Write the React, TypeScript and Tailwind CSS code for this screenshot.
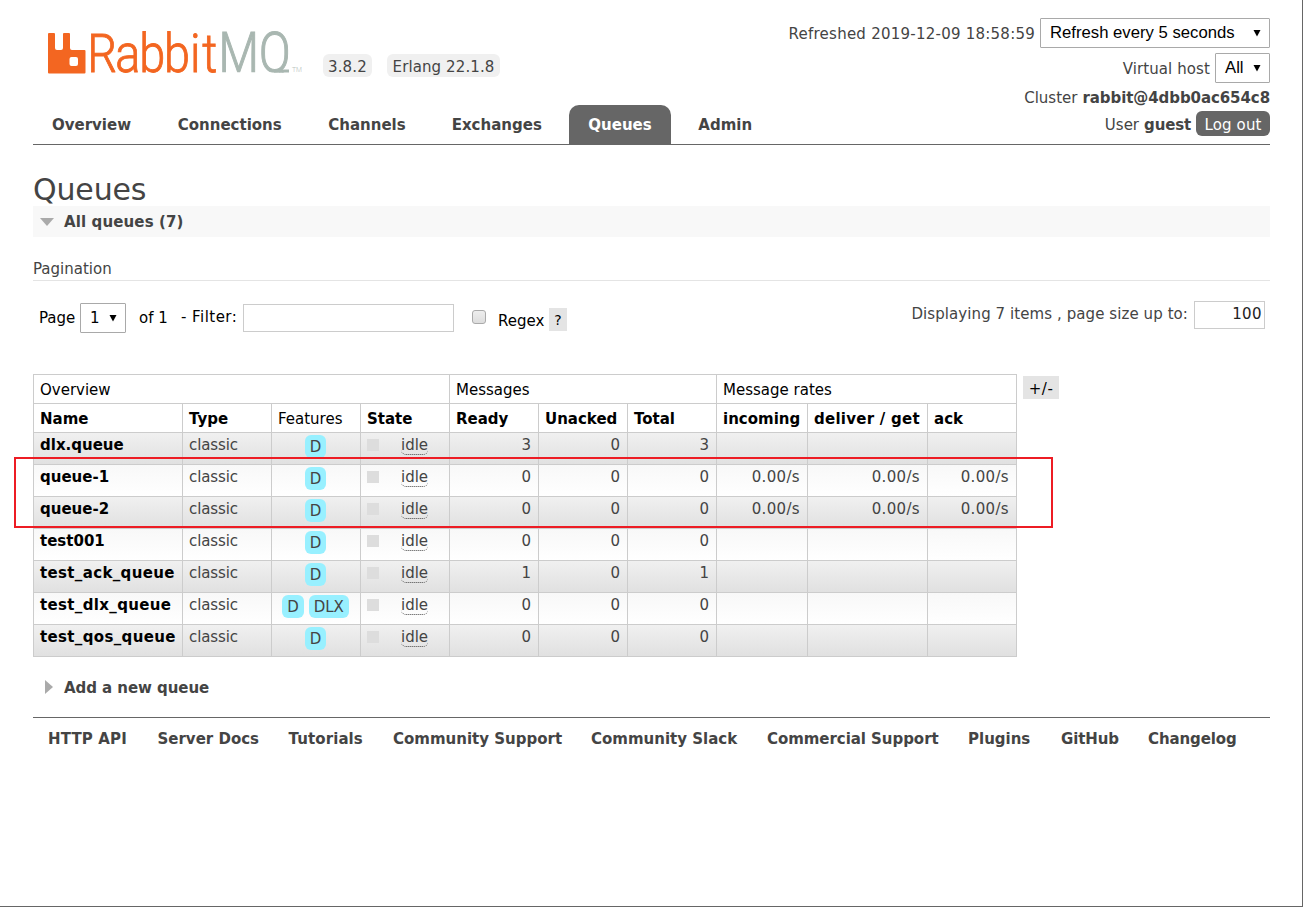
import { ReactNode } from 'react'
import clsx from 'clsx'

type Queue = {
  name: string
  features: string[]
  ready: number
  unacked: number
  total: number
  rates?: string[]
}

const tabs = [
  { label: 'Overview', box: 'w-[117px]' },
  { label: 'Connections', box: 'w-[143px]' },
  { label: 'Channels', box: 'w-[115px]' },
  { label: 'Exchanges', box: 'w-[128px]' },
  { label: 'Queues', box: 'w-[102px]' },
  { label: 'Admin', box: 'w-[92px]' },
]

const queues: Queue[] = [
  { name: 'dlx.queue', features: ['D'], ready: 3, unacked: 0, total: 3 },
  { name: 'queue-1', features: ['D'], ready: 0, unacked: 0, total: 0, rates: ['0.00/s', '0.00/s', '0.00/s'] },
  { name: 'queue-2', features: ['D'], ready: 0, unacked: 0, total: 0, rates: ['0.00/s', '0.00/s', '0.00/s'] },
  { name: 'test001', features: ['D'], ready: 0, unacked: 0, total: 0 },
  { name: 'test_ack_queue', features: ['D'], ready: 1, unacked: 0, total: 1 },
  { name: 'test_dlx_queue', features: ['D', 'DLX'], ready: 0, unacked: 0, total: 0 },
  { name: 'test_qos_queue', features: ['D'], ready: 0, unacked: 0, total: 0 },
]

const footerLinks = [
  { label: 'HTTP API', box: 'w-[109.500px] tracking-[0.15px]' },
  { label: 'Server Docs', box: 'w-[131px]' },
  { label: 'Tutorials', box: 'w-[104.500px] tracking-[0.1px]' },
  { label: 'Community Support', box: 'w-[198px]' },
  { label: 'Community Slack', box: 'w-[176px]' },
  { label: 'Commercial Support', box: 'w-[201px] tracking-[-0.050px]' },
  { label: 'Plugins', box: 'w-[93px]' },
  { label: 'GitHub', box: 'w-[87px] tracking-[-0.1px]' },
  { label: 'Changelog', box: 'w-[90px] tracking-[-0.1px]' },
]

const headCell = 'h-[29px] border-r border-b border-[#ccc] px-1.5 pt-[2px] pb-0 text-left align-middle text-black'
const bodyCell = 'h-8 border-r border-b border-[#ccc] px-1.5 pt-[2px] align-top leading-[20px]'
const numberCell = 'h-8 border-r border-b border-[#ccc] pr-[7px] pl-1 pt-[2px] text-right align-top leading-[20px]'

const Logo = () => (
  <svg width="258" height="62" viewBox="0 0 258 62" className="block overflow-visible">
    <path
      fill="#f36621"
      fillRule="evenodd"
      d="M2 3h5q1 0 1 1v14q0 2 2 2h4q2 0 2-2v-14q0-1 1-1h5q1 0 1 1v14q0 2 2 2h12.500q1 0 1 1v21.500q0 1-1 1h-35.500q-1 0-1-1v-38.500q0-1 1-1zM24.500 27q-2 0-2 2v5q0 2 2 2h4.500q2 0 2-2v-5q0-2-2-2z"
    />
    <clipPath id="baseline"><path d="M165 0h80v42.500h-80z" /></clipPath>
    <g className="font-[Roboto,sans-serif] font-light">
      <text transform="scale(0.86 1)" x="46.900 79.500 107.200 136.200 166.200 180.600" y="42" fill="#f36621" stroke="#f36621" strokeWidth="0.900" fontSize="54.500">Rabbit</text>
      <g clipPath="url(#baseline)">
        <text x="171.500" y="42" fill="#a9b7b1" stroke="#a9b7b1" strokeWidth="1.100" fontSize="55" textLength="72" lengthAdjust="spacingAndGlyphs">MQ</text>
      </g>
      {/* flat tail of the Q */}
      <path d="M227 39.500h15v3h-15z" fill="#a9b7b1" />
      <text x="245" y="42" fill="#b8c2be" fontSize="7.500" textLength="10" lengthAdjust="spacingAndGlyphs">TM</text>
    </g>
  </svg>
)

const SelectBox = ({ className, children }: { className: string; children: ReactNode }) => (
  <button className={clsx('flex items-center justify-between rounded-[1px] border border-[#a9a9a9] bg-white pr-[8px] pl-[9px] text-black', className)}>
    <span>{children}</span>
    <svg width="8" height="8" viewBox="0 0 8 8"><path d="M0.500 1h7l-3.500 6.500z" fill="#000" /></svg>
  </button>
)

const Header = () => (
  <header className="flex h-[145px] justify-between border-b border-[#666]">
    <div className="flex flex-col">
      <div className="flex h-[105px] pt-[30px] pl-[14px]">
        <Logo />
        <span className="mt-6 ml-[18px] flex h-[23px] w-[49px] items-center justify-center rounded-md bg-[#f0f0f0] pt-[3px] tracking-[0.2px]">3.8.2</span>
        <span className="mt-6 ml-[15px] flex h-[23px] w-[113px] items-center justify-center rounded-md bg-[#f0f0f0] pt-[3px] tracking-[0.1px]">Erlang 22.1.8</span>
      </div>
      <nav className="flex h-[39px] gap-x-[8.250px]">
        {tabs.map(tab => (
          <a
            key={tab.label}
            className={clsx('flex items-center justify-center rounded-t-[10px] font-bold', tab.box, tab.label === 'Queues' && 'bg-[#666] text-white')}
          >
            {tab.label}
          </a>
        ))}
      </nav>
    </div>
    <div className="flex flex-col items-end pt-[18px]">
      <div className="flex h-[30px] items-center gap-[5px]">
        <span className="pt-[2px] tracking-[0.240px]">Refreshed 2019-12-09 18:58:59</span>
        <SelectBox className="h-[30px] w-[230px] font-['Liberation_Sans',sans-serif] text-[16.700px]">Refresh every 5 seconds</SelectBox>
      </div>
      <div className="mt-[5px] flex h-[30px] items-center gap-[5px]">
        <span className="pt-[2px] tracking-[0.1px]">Virtual host</span>
        <SelectBox className="h-[30px] w-[55px] font-['Liberation_Sans',sans-serif] text-[16.700px]">All</SelectBox>
      </div>
      <div className="mt-[5px] flex h-[20px] items-center gap-[5px]">
        <span>Cluster</span>
        <b className="tracking-[-0.080px]">rabbit@4dbb0ac654c8</b>
      </div>
      <div className="mt-[3px] flex h-[25px] items-center gap-[5px]">
        <span className="pt-[2px]">User</span>
        <b className="pt-[2px] tracking-[-0.150px]">guest</b>
        <button className="h-[25px] w-[74px] rounded-md bg-[#666] pt-[2px] tracking-[0.150px] text-white">Log out</button>
      </div>
    </div>
  </header>
)

const PageControls = () => (
  <div className="flex h-[38px] items-start pt-[22px] text-black">
    <span className="ml-[6px] w-[41px] pt-[5px]">Page</span>
    <SelectBox className="h-[30px] w-[46px]">1</SelectBox>
    <span className="ml-[13px] w-[42px] pt-[5px]">of 1</span>
    <span className="w-[62px] pt-[4px] tracking-[0.450px] whitespace-nowrap">- Filter:</span>
    <input className="mt-px h-[28px] w-[211px] border border-[#ccc] bg-white" />
    <span className="mt-[7px] ml-[18px] size-[14px] rounded-[3px] border border-[#aaa] bg-linear-to-b from-[#eee] to-[#ddd]" />
    <span className="ml-[12px] w-[51px] pt-[8px]">Regex</span>
    <button className="mt-[5px] h-[23px] w-[18px] bg-[#e4e4e4] text-sm">?</button>
    <span className="ml-auto pt-[1px] pr-[6px] tracking-[0.080px] text-[#444]">Displaying 7 items , page size up to:</span>
    <input className="mt-[-2px] mr-[5px] h-[28px] w-[71px] border border-[#ccc] bg-white pr-[2px] pb-[2px] text-right tracking-[0.400px] text-[#222]" defaultValue="100" />
  </div>
)

const Tag = ({ children }: { children: ReactNode }) => (
  <span className="flex h-[23px] items-center rounded-md bg-[#98f0ff] px-[5px] pt-px">{children}</span>
)

const QueueTable = () => (
  <table className="w-[984px] table-fixed border-separate border-spacing-0 border-t border-l border-[#ccc]">
    <colgroup>
      <col className="w-[149px]" />
      <col className="w-[89px]" />
      <col className="w-[89px]" />
      <col className="w-[89px]" />
      <col className="w-[89px]" />
      <col className="w-[89px]" />
      <col className="w-[89px]" />
      <col className="w-[91px]" />
      <col className="w-[120px]" />
      <col className="w-[89px]" />
    </colgroup>
    <thead>
      <tr>
        <th colSpan={4} className={clsx(headCell, 'font-normal')}>Overview</th>
        <th colSpan={3} className={clsx(headCell, 'font-normal')}>Messages</th>
        <th colSpan={3} className={clsx(headCell, 'font-normal')}>Message rates</th>
      </tr>
      <tr className="whitespace-nowrap">
        {['Name', 'Type', 'Features', 'State', 'Ready', 'Unacked', 'Total', 'incoming', 'deliver / get', 'ack'].map(label => (
          <th
            key={label}
            className={clsx(headCell, label === 'Features' ? 'font-normal' : 'font-bold', label === 'deliver / get' && 'tracking-[0.250px]')}
          >
            {label}
          </th>
        ))}
      </tr>
    </thead>
    <tbody>
      {queues.map(queue => (
        <tr key={queue.name} className="bg-linear-to-b odd:from-[#f0f0f0] odd:to-[#e0e0e0] even:from-[#f8f8f8] even:to-white">
          <td className={clsx(bodyCell, 'font-bold whitespace-nowrap text-black', queue.name.startsWith('test_') && 'tracking-[0.350px]')}>{queue.name}</td>
          <td className={clsx(bodyCell, 'tracking-[-0.100px]')}>classic</td>
          <td className={bodyCell}>
            <div className="mr-px flex justify-center gap-[5px]">
              {queue.features.map(feature => <Tag key={feature}>{feature}</Tag>)}
            </div>
          </td>
          <td className={bodyCell}>
            <div className="flex items-start">
              <span className="mt-1 size-3 bg-[#ddd]" />
              <span className="mt-[2px] ml-[22px] rounded-[5px] border-b border-dotted border-[#444] leading-[17px]">idle</span>
            </div>
          </td>
          <td className={numberCell}>{queue.ready}</td>
          <td className={numberCell}>{queue.unacked}</td>
          <td className={numberCell}>{queue.total}</td>
          {[0, 1, 2].map(i => (
            <td key={i} className={clsx(numberCell, 'tracking-[0.350px]')}>{queue.rates?.[i]}</td>
          ))}
        </tr>
      ))}
    </tbody>
  </table>
)

const App = () => (
  <div className="relative h-[907px] w-[1303px] overflow-hidden border-r border-b border-[#666] bg-white pr-8 pl-[33px] font-['DejaVu_Sans',Verdana,sans-serif] text-[15px] leading-[20px] text-[#444]">
    <Header />
    <main>
      <h1 className="mt-[27px] h-[34px] text-[30px] leading-[36px] tracking-[-0.150px]">Queues</h1>
      <h2 className="flex h-[31px] items-center bg-[#f8f8f8] pl-[7px] font-bold">
        <svg width="14" height="8" viewBox="0 0 14 8"><path d="M0 0h14l-7 8z" fill="#aaa" /></svg>
        <span className="ml-[10px] tracking-[0.120px]">All queues (7)</span>
      </h2>
      <h3 className="mt-[20px] h-[24px] border-b border-[#e4e4e4] leading-[24px]">Pagination</h3>
      <PageControls />
      <div className="mt-[55px] flex items-start gap-[6px]">
        <QueueTable />
        <button className="mt-[2px] h-[23px] w-[36px] bg-[#e4e4e4] pt-[2px] tracking-[0.600px] text-black">+/-</button>
      </div>
      <h2 className="mt-[20px] flex h-[20px] items-center pl-[12px] font-bold">
        <svg width="8" height="14" viewBox="0 0 8 14"><path d="M0 0v14l8-7z" fill="#aaa" /></svg>
        <span className="ml-[11px] pt-[2px] tracking-[-0.060px]">Add a new queue</span>
      </h2>
    </main>
    <footer className="mt-[20px] flex border-t border-[#666] pt-[11px] pl-[15px] font-bold whitespace-nowrap">
      {footerLinks.map(link => <a key={link.label} className={link.box}>{link.label}</a>)}
    </footer>
    {/* highlight around queue-1 and queue-2 */}
    <div className="pointer-events-none absolute top-[457px] left-[14px] h-[71px] w-[1039px] border-2 border-[#ed1c24]" />
  </div>
)

export default App
